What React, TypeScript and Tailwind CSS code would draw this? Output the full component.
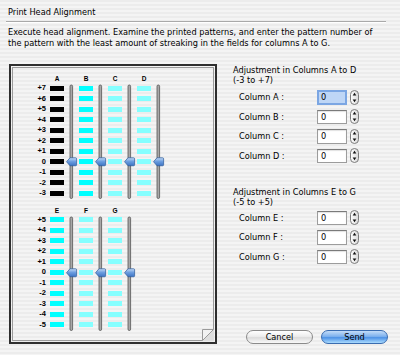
import React from 'react';

const ROWS_AD = ['+7', '+6', '+5', '+4', '+3', '+2', '+1', '0', '-1', '-2', '-3'];
const ROWS_EG = ['+5', '+4', '+3', '+2', '+1', '0', '-1', '-2', '-3', '-4', '-5'];

const pinstripe =
  'bg-[repeating-linear-gradient(180deg,#ececec_0px,#ececec_2px,#f4f4f4_2px,#f4f4f4_4px)]';

// vertical slider with the blue aqua thumb pointing left
function Slider({ rows, at }: { rows: number; at: number }) {
  const h = rows * 10.5 + 1;
  const y = at * 10.5 + 5.25;
  return (
    <svg width="15" height={h} className="block">
      <defs>
        <linearGradient id="thumbFill" x1="0" y1="0" x2="0" y2="1">
          <stop offset="0" stopColor="#c9def7" />
          <stop offset="0.45" stopColor="#6d9ee0" />
          <stop offset="1" stopColor="#3d74c4" />
        </linearGradient>
      </defs>
      <rect x="6" y="2" width="2.6" height={h - 3} rx="1.3" fill="#a8a8a8" stroke="#555" strokeWidth="0.8" />
      <path
        d={`M2.5 ${y} L6 ${y - 4} H11.6 Q12.6 ${y - 4} 12.6 ${y - 3} V${y + 3} Q12.6 ${y + 4} 11.6 ${y + 4} H6 Z`}
        fill="url(#thumbFill)"
        stroke="#2c5a9a"
        strokeWidth="0.7"
      />
    </svg>
  );
}

function Group({ letters, colors, labels, at }: { letters: string[]; colors: string[]; labels: string[]; at: number }) {
  return (
    <div className="flex">
      <div className="w-[33px] mr-[4px] flex flex-col">
        <div className="h-[9px]" />
        {labels.map((l) => (
          <div key={l} className="h-[10.5px] leading-[10.5px] text-right text-[7.5px] font-bold font-['Liberation_Sans',sans-serif]">
            {l}
          </div>
        ))}
      </div>
      {letters.map((letter, i) => (
        <div key={letter} className="flex">
          <div className="w-[14px] flex flex-col">
            <div className="h-[9px] leading-[9px] text-center text-[6.5px] font-bold font-['Liberation_Sans',sans-serif]">{letter}</div>
            {labels.map((l) => (
              <div key={l} className="h-[10.5px] flex items-center">
                <div className={`h-[5px] w-[14px] ${colors[i]}`} />
              </div>
            ))}
          </div>
          <div className="w-[15px] pt-[9px]">
            <Slider rows={labels.length} at={at} />
          </div>
        </div>
      ))}
    </div>
  );
}

function Stepper() {
  return (
    <svg width="9" height="15" className="block">
      <defs>
        <linearGradient id="stepFill" x1="0" y1="0" x2="1" y2="0">
          <stop offset="0" stopColor="#ffffff" />
          <stop offset="1" stopColor="#d8d8d8" />
        </linearGradient>
      </defs>
      <rect x="0.5" y="0.5" width="8" height="14" rx="4" fill="url(#stepFill)" stroke="#7c7c7c" />
      <path d="M4.5 2.8 L6.3 5.4 H2.7 Z" fill="#111" />
      <path d="M4.5 12.2 L6.3 9.6 H2.7 Z" fill="#111" />
    </svg>
  );
}

function Field({ label, focused }: { label: string; focused?: boolean }) {
  return (
    <div className="flex items-center h-[14.5px]">
      <div className="w-[84px] pl-[6px]">{label}</div>
      {focused ? (
        <div className="w-[30px] h-[14.5px] border-2 border-[#7ba6e3] bg-[#bed6f6] pl-[2px] leading-[10.5px]">0</div>
      ) : (
        <div className="w-[30px] h-[14.5px] border border-[#9c9c9c] border-t-[#7a7a7a] bg-white pl-[3px] leading-[12.5px] shadow-[inset_0_1px_1px_rgba(0,0,0,0.12)]">
          0
        </div>
      )}
      <div className="ml-[3px]">
        <Stepper />
      </div>
    </div>
  );
}

export default function App() {
  return (
    <div className={`w-[400px] h-[355px] overflow-hidden text-black text-[8.2px] font-['DejaVu_Sans',sans-serif] ${pinstripe}`}>
      <div className="pt-[6px] pl-[8px] leading-[12px]">Print Head Alignment</div>
      <div className="mt-[3px] ml-[6px] w-[380px]">
        <div className="h-px bg-[#a9a9a9]" />
        <div className="h-px bg-white" />
      </div>
      <div className="mt-[4px] pl-[8px] leading-[11px]">
        Execute head alignment. Examine the printed patterns, and enter the pattern number of
        <br />
        the pattern with the least amount of streaking in the fields for columns A to G.
      </div>

      <div className="mt-[15px] flex">
        {/* printed pattern sheet */}
        <div className="ml-[9px] w-[208px] h-[280px] border-2 border-[#2e2e2e] p-px relative">
          <div className="h-full border border-[#9a9a9a] flex flex-col pt-[6px]">
            <Group
              letters={['A', 'B', 'C', 'D']}
              colors={['bg-black', 'bg-[#00ffff]', 'bg-[#85ffff]', 'bg-[#85ffff]']}
              labels={ROWS_AD}
              at={7}
            />
            <div className="mt-[6px]">
              <Group
                letters={['E', 'F', 'G']}
                colors={['bg-[#00ffff]', 'bg-[#85ffff]', 'bg-[#85ffff]']}
                labels={ROWS_EG}
                at={5}
              />
            </div>
          </div>
          <svg width="12" height="12" className="absolute right-[1px] bottom-[1px]">
            <path d="M12 0 V12 H0 Z" fill="#dedede" />
            <path d="M0.5 0.5 H11.5 L0.5 11.5 Z" fill="#f2f2f2" stroke="#9a9a9a" strokeWidth="1" />
          </svg>
        </div>

        {/* entry fields */}
        <div className="ml-[16px] flex flex-col">
          <div className="mt-[1px] leading-[10px]">
            Adjustment in Columns A to D
            <br />
            (-3 to +7)
          </div>
          <div className="mt-[5px] flex flex-col gap-[5px]">
            <Field label="Column A :" focused />
            <Field label="Column B :" />
            <Field label="Column C :" />
            <Field label="Column D :" />
          </div>
          <div className="mt-[23.5px] leading-[10px]">
            Adjustment in Columns E to G
            <br />
            (-5 to +5)
          </div>
          <div className="mt-[4px] flex flex-col gap-[5px]">
            <Field label="Column E :" />
            <Field label="Column F :" />
            <Field label="Column G :" />
          </div>
          <div className="mt-[66px] ml-[13px] flex gap-[8px]">
            <button className="w-[67px] h-[14px] rounded-full border border-[#8a8a8a] bg-[linear-gradient(180deg,#ffffff_0%,#ededed_45%,#dcdcdc_55%,#f8f8f8_100%)] leading-[12px] text-center">
              Cancel
            </button>
            <button className="w-[67px] h-[14px] rounded-full border border-[#3a6cb0] bg-[linear-gradient(180deg,#c3dcf8_0%,#7fb2ee_45%,#4f93e6_55%,#a9dafe_100%)] leading-[12px] text-center">
              Send
            </button>
          </div>
        </div>
      </div>
    </div>
  );
}
